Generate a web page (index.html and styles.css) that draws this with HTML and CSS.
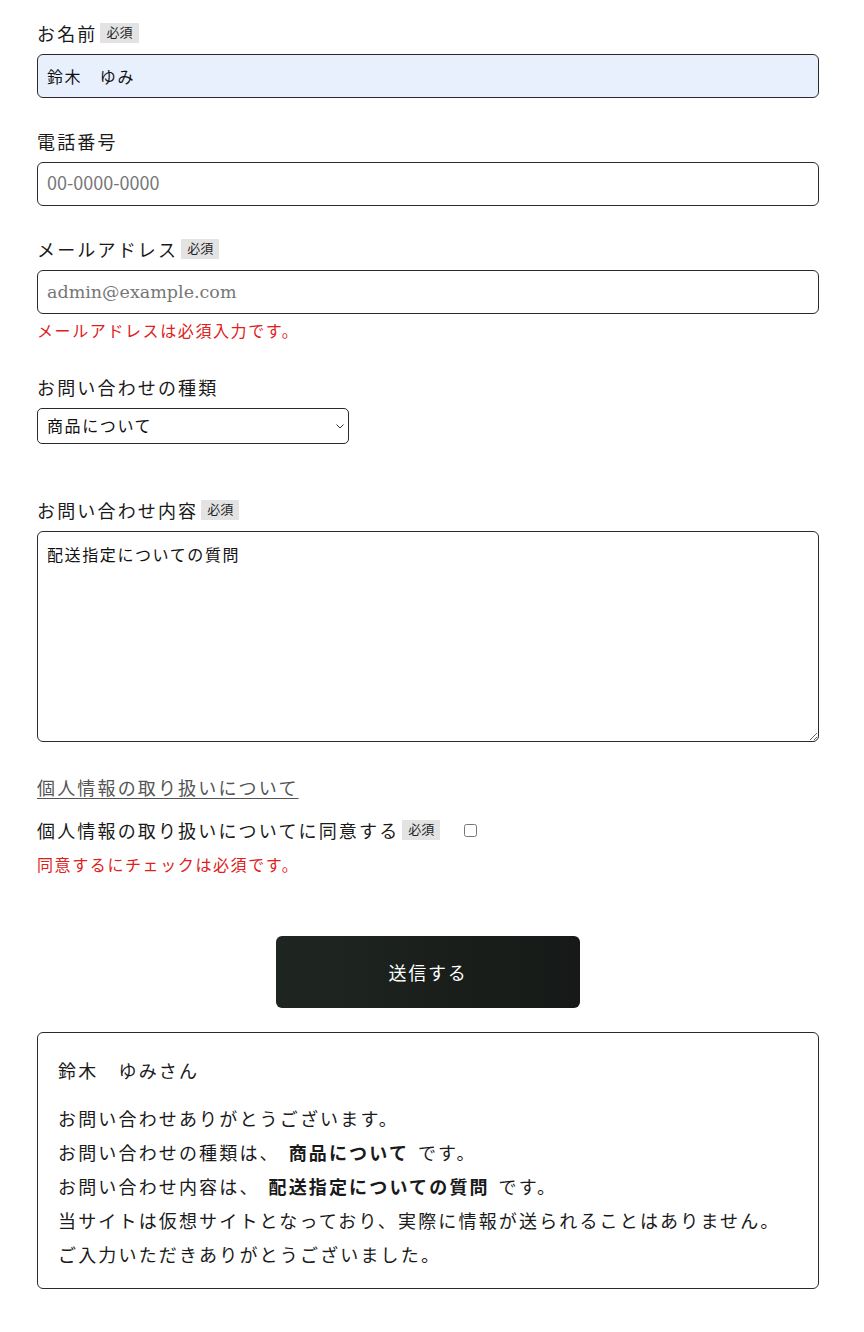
FILE: index.html
```html
<!DOCTYPE html>
<html lang="ja">
<head>
    <meta charset="UTF-8">
    <meta name="viewport" content="width=device-width, initial-scale=1.0">
    <title>お問い合わせ</title>
    <link rel="stylesheet" href="styles.css">
</head>
<body>

    <div class="container">
        <form class="contact-form">
            <!-- お名前 -->
            <div class="field">
                <label class="field-label" for="name">お名前<span class="required">必須</span></label>
                <input type="text" id="name" class="text-input filled" value="鈴木　ゆみ">
            </div>

            <!-- 電話番号 -->
            <div class="field">
                <label class="field-label" for="tel">電話番号</label>
                <input type="tel" id="tel" class="text-input tel-input" placeholder="00-0000-0000">
            </div>

            <!-- メールアドレス -->
            <div class="field">
                <label class="field-label" for="email">メールアドレス<span class="required">必須</span></label>
                <input type="text" id="email" class="text-input email-input" placeholder="admin@example.com">
                <p class="error">メールアドレスは必須入力です。</p>
            </div>

            <!-- 種類 -->
            <div class="field field-select">
                <label class="field-label" for="kind">お問い合わせの種類</label>
                <div class="select-wrap">
                    <select id="kind" class="select-input">
                        <option>商品について</option>
                        <option>配送について</option>
                        <option>その他</option>
                    </select>
                    <!-- chevron drawn over the native select -->
                    <svg class="select-arrow" width="8" height="5" viewBox="0 0 8 5"><path d="M0.5 0.5 L4 4 L7.5 0.5" fill="none" stroke="#333" stroke-width="1"/></svg>
                </div>
            </div>

            <!-- 内容 -->
            <div class="field">
                <label class="field-label" for="message">お問い合わせ内容<span class="required">必須</span></label>
                <textarea id="message" class="textarea-input">配送指定についての質問</textarea>
            </div>

            <!-- 個人情報 -->
            <div class="privacy">
                <a href="#" class="privacy-link">個人情報の取り扱いについて</a>
                <label class="agree-label" for="agree">個人情報の取り扱いについてに同意する<span class="required">必須</span><input type="checkbox" id="agree" class="agree-check"></label>
                <p class="error">同意するにチェックは必須です。</p>
            </div>

            <div class="submit-row">
                <button type="button" class="submit-btn">送信する</button>
            </div>
        </form>

        <!-- 送信結果 -->
        <div class="result">
            <p class="result-name">鈴木　ゆみさん</p>
            <p>お問い合わせありがとうございます。</p>
            <p>お問い合わせの種類は、 <strong>商品について</strong> です。</p>
            <p>お問い合わせ内容は、 <strong>配送指定についての質問</strong> です。</p>
            <p>当サイトは仮想サイトとなっており、実際に情報が送られることはありません。</p>
            <p>ご入力いただきありがとうございました。</p>
        </div>
    </div>

</body>
</html>
```

FILE: styles.css
```css
/* General reset */
* {
    margin: 0;
    padding: 0;
    box-sizing: border-box;
}

body, input, select, textarea, button {
    font-family: "DejaVu Serif", "Noto Sans CJK JP", serif;
}

body {
    background-color: #FFFFFF;
    color: #1A1A1A;
}

.container {
    width: 782px;
    margin-left: 37px;
    padding-top: 19px;
    padding-bottom: 40px;
}

/* Form fields */
.field {
    margin-bottom: 29px;
}

.field-select {
    margin-bottom: 52px;
}

.field-label {
    display: flex;
    align-items: center;
    height: 28px;
    margin-bottom: 7px;
    font-size: 18px;
    letter-spacing: 0.12em;
}

/* 必須 badge */
.required {
    display: inline-block;
    margin-left: 3px;
    padding: 1px 6px;
    background-color: #E3E3E3;
    font-size: 13px;
    letter-spacing: 0;
    line-height: 18px;
    color: #222;
}

.text-input {
    display: block;
    width: 100%;
    height: 44px;
    padding: 0 9px;
    font-size: 16px;
    letter-spacing: 0.1em;
    border: 1px solid #2A2A2A;
    border-radius: 6px;
    background-color: #FFFFFF;
    color: #111;
    outline: none;
}

.text-input::placeholder {
    color: #767676;
    letter-spacing: 0;
}

.tel-input::placeholder {
    font-family: "Noto Sans CJK JP", sans-serif;
    font-size: 18px;
}

.email-input::placeholder {
    font-size: 17.5px;
}

/* Autofilled look */
.text-input.filled {
    background-color: #E8F0FE;
}

.select-wrap {
    position: relative;
    width: 312px;
}

.select-input {
    display: block;
    width: 100%;
    height: 36px;
    padding: 0 9px;
    font-size: 16px;
    letter-spacing: 0.1em;
    border: 1px solid #2A2A2A;
    border-radius: 5px;
    background-color: #FFFFFF;
    color: #111;
    appearance: none;
    -webkit-appearance: none;
}

.select-arrow {
    position: absolute;
    right: 5px;
    top: 16px;
}

.textarea-input {
    display: block;
    width: 100%;
    height: 211px;
    padding: 13px 9px;
    font-size: 16px;
    line-height: 1.4;
    letter-spacing: 0.1em;
    border: 1px solid #2A2A2A;
    border-radius: 6px;
    resize: vertical;
    color: #111;
}

/* Error message */
.error {
    color: #E0201B;
    font-size: 16px;
    line-height: 24px;
    margin-top: 6px;
    letter-spacing: 0.1em;
}

/* Privacy */
.privacy {
    padding-top: 4px;
}

.privacy-link {
    display: inline-block;
    font-size: 18px;
    letter-spacing: 0.12em;
    line-height: 28px;
    color: #555;
    text-decoration: underline;
    text-underline-offset: 3px;
}

.agree-label {
    display: flex;
    align-items: center;
    height: 28px;
    margin-top: 13px;
    font-size: 18px;
    letter-spacing: 0.12em;
}

.agree-check {
    width: 13px;
    height: 13px;
    margin-left: 24px;
}

.privacy .error {
    margin-top: 10px;
}

/* Submit button */
.submit-row {
    display: flex;
    justify-content: center;
    margin-top: 58px;
}

.submit-btn {
    width: 304px;
    height: 72px;
    border: none;
    border-radius: 6px;
    background: linear-gradient(90deg, #1F2621, #161917);
    color: #FFFFFF;
    font-size: 18px;
    letter-spacing: 0.1em;
    cursor: pointer;
}

/* Result box */
.result {
    margin-top: 24px;
    padding: 22px 20px 15px 20px;
    border: 1px solid #2A2A2A;
    border-radius: 6px;
    font-size: 18px;
    letter-spacing: 0.12em;
    line-height: 34px;
    color: #1A1A1A;
}

.result-name {
    margin-bottom: 14px;
}

.result strong {
    font-weight: 700;
    margin: 0 1px;
}
```
